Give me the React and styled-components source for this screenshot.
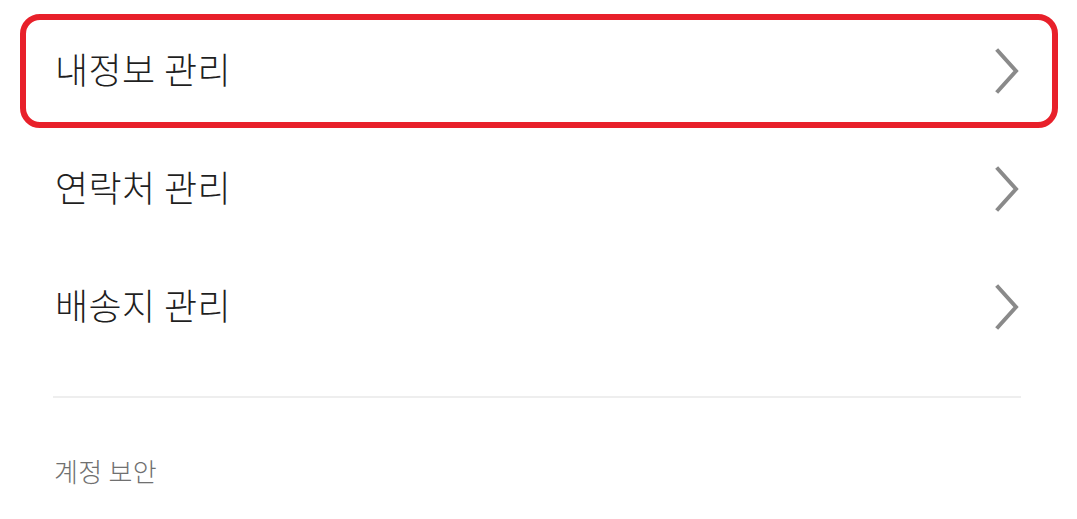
import React from 'react';
import styled, { createGlobalStyle } from 'styled-components';

const GlobalStyle = createGlobalStyle`
  html, body {
    margin: 0;
    padding: 0;
    background: #ffffff;
  }
  body {
    font-family: "Noto Sans CJK KR", "Noto Sans", sans-serif;
  }
`;

const Page = styled.div`
  width: 1077px;
  height: 519px;
  overflow: hidden;
  padding-top: 12px;
  box-sizing: border-box;
`;

const MenuList = styled.ul`
  list-style: none;
  margin: 0;
  padding: 0 19px 0 20px;
`;

const MenuItem = styled.li`
  height: 118px;
  padding: 2px 0;
  box-sizing: border-box;
`;

const MenuLink = styled.a`
  display: flex;
  align-items: center;
  justify-content: space-between;
  height: 100%;
  box-sizing: border-box;
  padding: 0 32px 0 29px;
  border: 6px solid ${({ active }) => (active ? '#e8202a' : 'transparent')};
  border-radius: 20px;
  color: #1f1f1f;
  text-decoration: none;
`;

const Label = styled.span`
  font-size: 36px;
  font-weight: 300;
  letter-spacing: 0.4px;
  line-height: 40px;
  margin-top: -6px;
`;

const Divider = styled.hr`
  margin: 30px 56px 0 53px;
  border: 0;
  height: 2px;
  background: #eeeeee;
`;

const SectionTitle = styled.h3`
  margin: 55px 0 0 54px;
  font-size: 26px;
  font-weight: 300;
  color: #707070;
  line-height: 36px;
  letter-spacing: 0.3px;
`;

const Chevron = () => (
  <svg width="26" height="48" viewBox="0 0 26 48" fill="none">
    <polyline
      points="4,4 22,24 4,44"
      stroke="#8a8a8a"
      strokeWidth="4"
      strokeLinecap="square"
      strokeLinejoin="miter"
    />
  </svg>
);

const items = ['내정보 관리', '연락처 관리', '배송지 관리'];

const App = () => (
  <Page>
    <GlobalStyle />
    <MenuList>
      {items.map((label, i) => (
        <MenuItem key={label}>
          <MenuLink href="#" active={i === 0 ? 1 : 0}>
            <Label>{label}</Label>
            <Chevron />
          </MenuLink>
        </MenuItem>
      ))}
    </MenuList>
    <Divider />
    <SectionTitle>계정 보안</SectionTitle>
  </Page>
);

export default App;
